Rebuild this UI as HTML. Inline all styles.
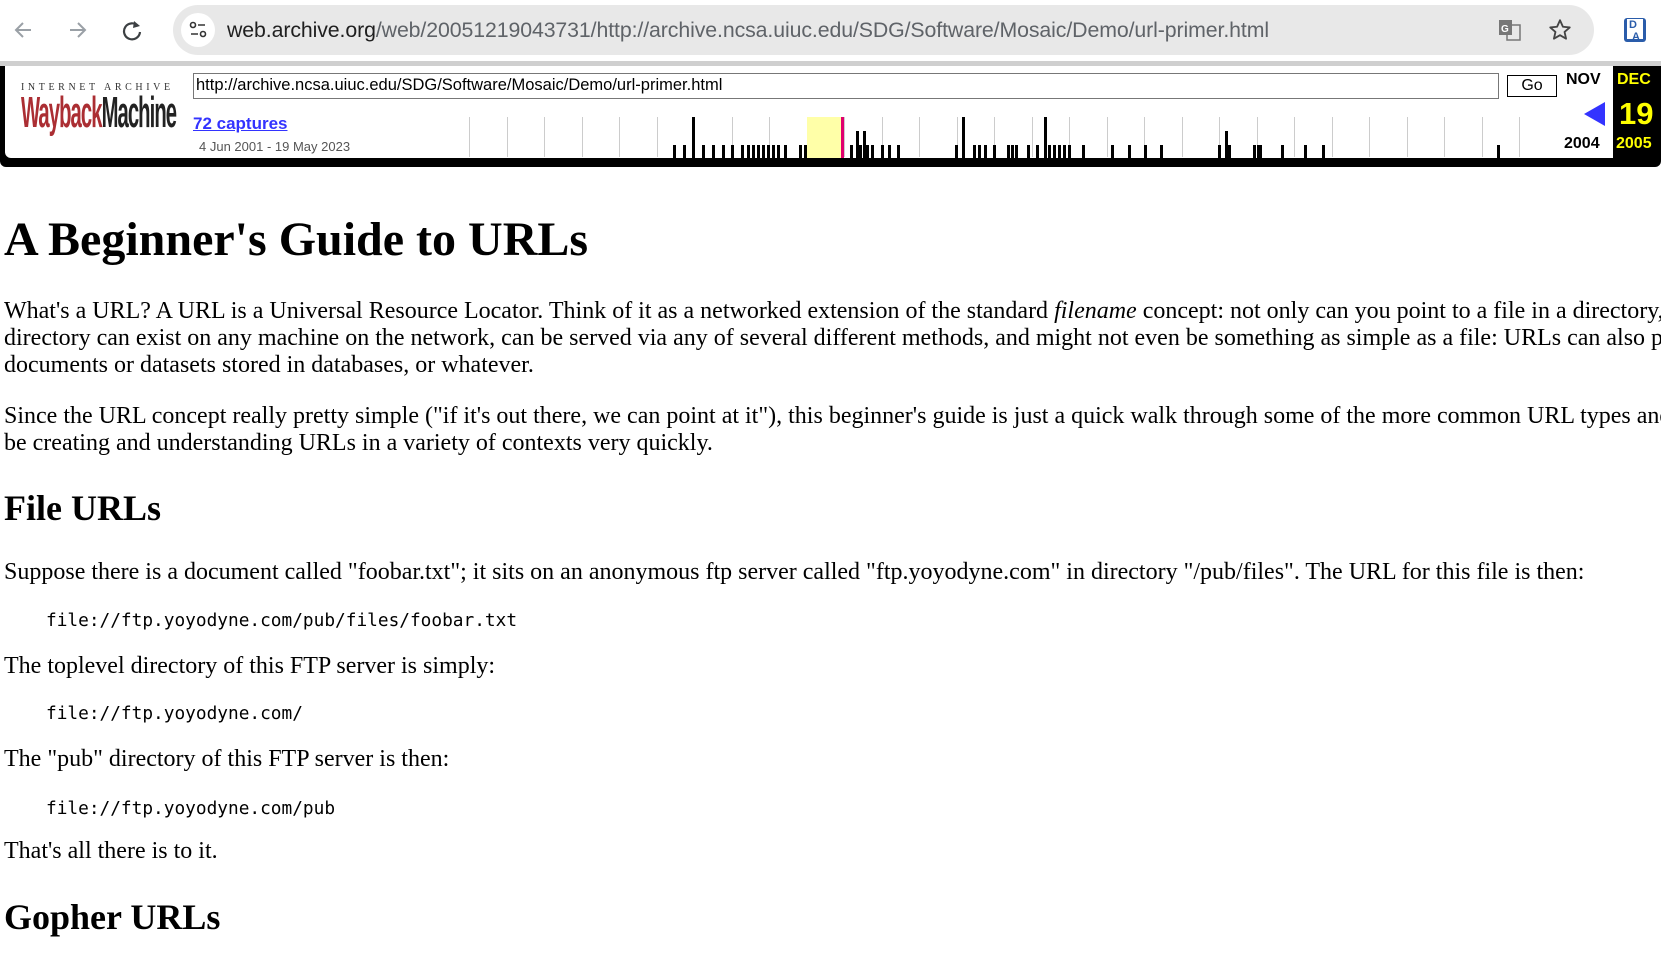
<!DOCTYPE html>
<html><head><meta charset="utf-8"><style>
*{margin:0;padding:0;box-sizing:border-box}
html,body{width:1661px;height:953px;overflow:hidden;background:#fff;position:relative}
.a{position:absolute;white-space:nowrap}
.s{font-family:"Liberation Serif",serif;font-size:24px;color:#000;line-height:27px}
.m{font-family:"DejaVu Sans Mono","Liberation Mono",monospace;font-size:17.8px;color:#000}
.h{font-family:"Liberation Serif",serif;font-weight:bold;color:#000}
.wb{font-family:"Liberation Sans",Arial,sans-serif}
.g{position:absolute;top:117px;width:1px;height:40px;background:#ccc}
.b{position:absolute;width:3px;background:#000}
</style></head><body>
<div class="a" style="left:0;top:0;width:1661px;height:61px;background:#fff"></div>
<svg class="a" style="left:12px;top:18px" width="140" height="24" viewBox="0 0 140 24">
<path d="M19 12H5M11 5l-7 7 7 7" fill="none" stroke="#9aa0a6" stroke-width="2"/>
<path d="M58 12h14M66 5l7 7-7 7" fill="none" stroke="#9aa0a6" stroke-width="2"/>
<path d="M126 8a8 8 0 1 0 2 6" fill="none" stroke="#3c4043" stroke-width="2.2"/>
<path d="M122 3l6 5-7 2z" fill="#3c4043"/>
</svg>
<div class="a" style="left:173px;top:5px;width:1421px;height:50px;border-radius:25px;background:#e8e8e8"></div>
<div class="a" style="left:181px;top:13px;width:34px;height:34px;border-radius:17px;background:#fff"></div>
<svg class="a" style="left:187px;top:19px" width="22" height="22" viewBox="0 0 22 22"><circle cx="6" cy="6" r="2.5" fill="none" stroke="#333" stroke-width="1.6"/><path d="M11 6h7M4 15h7" stroke="#333" stroke-width="1.6"/><circle cx="16" cy="15" r="2.5" fill="none" stroke="#333" stroke-width="1.6"/></svg>
<div class="a wb" style="left:227px;top:18px;font-size:21.3px;color:#5f6368;letter-spacing:-0.1px"><span style="color:#1f1f1f">web.archive.org</span>/web/20051219043731/http://archive.ncsa.uiuc.edu/SDG/Software/Mosaic/Demo/url-primer.html</div>
<svg class="a" style="left:1497px;top:17px" width="26" height="26" viewBox="0 0 26 26"><rect x="2" y="3" width="13" height="15" fill="#777"/><rect x="10" y="8" width="13" height="15" fill="none" stroke="#777" stroke-width="1.5"/><text x="4" y="15" font-family="Liberation Sans" font-size="10" font-weight="bold" fill="#fff">G</text></svg>
<svg class="a" style="left:1547px;top:17px" width="26" height="26" viewBox="0 0 24 24"><path d="M12 3l2.7 6 6.3.6-4.8 4.2 1.4 6.2L12 16.8 6.4 20l1.4-6.2L3 9.6 9.3 9z" fill="none" stroke="#444" stroke-width="1.7" stroke-linejoin="round"/></svg>
<div class="a" style="left:1624px;top:18px;width:22px;height:24px;background:#2a5caa;border-radius:3px"></div>
<div class="a wb" style="left:1627px;top:19px;width:16px;height:20px;background:#fff;font-size:11px;color:#2a5caa;font-weight:bold;line-height:12px;padding-left:2px">D<br>&nbsp;A</div>
<div class="a" style="left:0;top:61px;width:1661px;height:5px;background:#cfcfcf"></div>
<div class="a" style="left:0;top:66px;width:1661px;height:101px;background:#000;border-radius:0 0 6px 6px"></div>
<div class="a" style="left:5px;top:66px;width:1608px;height:92px;background:#fff;border-radius:0 0 0 6px"></div>
<div class="a" style="left:21px;top:82px;font-family:'Liberation Serif',serif;font-size:10px;letter-spacing:3.6px;color:#333">INTERNET ARCHIVE</div>
<div class="a wb" style="left:21px;top:90px;font-size:44px;font-weight:bold;line-height:46px;letter-spacing:-2px;transform:scaleX(0.46);transform-origin:0 0;color:#ab2e33">Wayback<span style="color:#222">Machine</span></div>
<div class="a" style="left:193px;top:73px;width:1306px;height:26px;border:1px solid #777;background:#fff"></div>
<div class="a wb" style="left:196px;top:76px;font-size:16.5px;color:#000">http://archive.ncsa.uiuc.edu/SDG/Software/Mosaic/Demo/url-primer.html</div>
<div class="a wb" style="left:1507px;top:75px;width:50px;height:22px;border:1px solid #000;font-size:16px;text-align:center;line-height:20px">Go</div>
<div class="a wb" style="left:193px;top:114px;font-size:17px;font-weight:bold;color:#33f;text-decoration:underline">72 captures</div>
<div class="a wb" style="left:199px;top:139px;font-size:13px;color:#555">4 Jun 2001 - 19 May 2023</div>
<div id="tl" class="a" style="left:0;top:0;width:0;height:0"></div>
<div class="a" style="left:807px;top:117px;width:35px;height:41px;background:#ffffa8"></div>
<div class="a" style="left:841px;top:117px;width:3px;height:41px;background:#e0006e"></div>
<div class="a wb" style="left:1566px;top:71px;font-size:16px;font-weight:bold">NOV</div>
<svg class="a" style="left:1584px;top:102px" width="22" height="24"><path d="M21 0V24L0 12z" fill="#3333ff"/></svg>
<div class="a wb" style="left:1564px;top:135px;font-size:16px;font-weight:bold">2004</div>
<div class="a wb" style="left:1617px;top:71px;font-size:16px;font-weight:bold;color:#ff0">DEC</div>
<div class="a wb" style="left:1619px;top:96px;font-size:31px;font-weight:bold;color:#ff0">19</div>
<div class="a wb" style="left:1616px;top:135px;font-size:16px;font-weight:bold;color:#ff0">2005</div>
<script>
var h='';for(var x=469;x<1522;x+=37.5)h+='<div class="g" style="left:'+Math.round(x)+'px"></div>';
var bars=[[673,0],[683,0],[692,2],[702,0],[712,0],[722,0],[731,0],[741,0],[747,0],[752,0],[757,0],[762,0],[767,0],[772,0],[777,0],[784,0],[799,0],[804,0],[836,1],[850,0],[856,1],[859,0],[863,1],[866,0],[871,0],[881,0],[888,0],[897,0],[955,0],[962,2],[973,0],[978,0],[984,0],[993,0],[1007,0],[1011,0],[1015,0],[1027,0],[1036,0],[1044,2],[1048,0],[1053,0],[1058,0],[1063,0],[1068,0],[1082,0],[1111,0],[1128,0],[1144,0],[1160,0],[1218,0],[1225,1],[1228,0],[1253,0],[1257,0],[1259,0],[1281,0],[1304,0],[1322,0],[1497,0]];
var tops=[145,131,117];
bars.forEach(function(b){h+='<div class="b" style="left:'+b[0]+'px;top:'+tops[b[1]]+'px;height:'+(158-tops[b[1]])+'px"></div>'});
document.getElementById('tl').outerHTML=h;
</script>
<div class="a h" style="left:4px;top:212px;font-size:48px">A Beginner's Guide to URLs</div>
<div class="a s" style="left:4px;top:298px">What's a URL? A URL is a Universal Resource Locator. Think of it as a networked extension of the standard <i>filename</i> concept: not only can you point to a file in a directory, but that file and that<br>directory can exist on any machine on the network, can be served via any of several different methods, and might not even be something as simple as a file: URLs can also point to queries,<br>documents or datasets stored in databases, or whatever.</div>
<div class="a s" style="left:4px;top:403px">Since the URL concept really pretty simple ("if it's out there, we can point at it"), this beginner's guide is just a quick walk through some of the more common URL types and should allow you to<br>be creating and understanding URLs in a variety of contexts very quickly.</div>
<div class="a h" style="left:4px;top:487px;font-size:36px">File URLs</div>
<div class="a s" style="left:4px;top:559px">Suppose there is a document called "foobar.txt"; it sits on an anonymous ftp server called "ftp.yoyodyne.com" in directory "/pub/files". The URL for this file is then:</div>
<div class="a m" style="left:46px;top:610px">file://ftp.yoyodyne.com/pub/files/foobar.txt</div>
<div class="a s" style="left:4px;top:653px">The toplevel directory of this FTP server is simply:</div>
<div class="a m" style="left:46px;top:703px">file://ftp.yoyodyne.com/</div>
<div class="a s" style="left:4px;top:746px">The "pub" directory of this FTP server is then:</div>
<div class="a m" style="left:46px;top:798px">file://ftp.yoyodyne.com/pub</div>
<div class="a s" style="left:4px;top:838px">That's all there is to it.</div>
<div class="a h" style="left:4px;top:896px;font-size:36px">Gopher URLs</div>
</body></html>
